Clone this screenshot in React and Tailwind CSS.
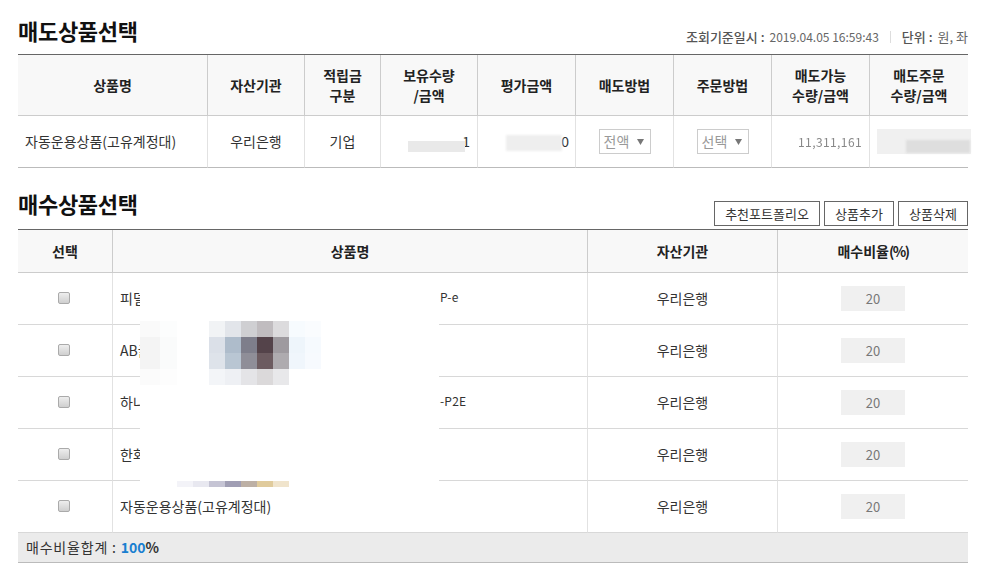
const sellHeaders = ['상품명', '자산기관', ['적립금', '구분'], ['보유수량', '/금액'], '평가금액', '매도방법', '주문방법', ['매도가능', '수량/금액'], ['매도주문', '수량/금액']];

const buyRows = [
  { left: '피델', right: 'P-e', gap: 'w-[320px]' },
  { left: 'AB글', right: '', gap: 'w-[20px]' },
  { left: '하나', right: '-P2E', gap: 'w-[320px]' },
  { left: '한화', right: '', gap: 'w-[20px]' },
  { left: '자동운용상품(고유계정대)', right: '', gap: '' },
];

const mosaic = [
  { y: 34, cells: [[0, 20, '#fafafa'], [20, 17, '#fcfdfd'], [69, 16, '#f1f3f5'], [85, 16, '#e2e5ea'], [101, 16, '#cfcfd2'], [117, 16, '#c0bcbf'], [133, 16, '#dcdbdd'], [149, 16, '#f7fbfe'], [165, 16, '#fafcfe']] },
  { y: 50, cells: [[0, 20, '#f4f4f4'], [20, 17, '#fafbfb'], [69, 16, '#dbe0e8'], [85, 16, '#aebccb'], [101, 16, '#7e7e8b'], [117, 16, '#54434a'], [133, 16, '#9e9a9f'], [149, 16, '#eef5fb'], [165, 16, '#f6fafe']] },
  { y: 66, cells: [[0, 20, '#f4f4f4'], [20, 17, '#fafbfb'], [69, 16, '#dee3ea'], [85, 16, '#b9c6d3'], [101, 16, '#8f8e98'], [117, 16, '#6c5b60'], [133, 16, '#aeabaf'], [149, 16, '#f0f6fc'], [165, 16, '#f7fafe']] },
  { y: 82, cells: [[0, 20, '#fbfbfb'], [20, 17, '#fdfdfd'], [69, 16, '#f3f5f8'], [85, 16, '#eef0f4'], [101, 16, '#e4e4e7'], [117, 16, '#dbd9da'], [133, 16, '#e8e8ea']] },
];

const strip = [[37, '#f3f3f8'], [53, '#e8e8f0'], [69, '#c5c4d4'], [85, '#a09eb4'], [101, '#bdb0a5'], [117, '#e0cb9c'], [133, '#f0e4cc']];

const SelectBox = ({ label }) => (
  <div className="mx-auto flex h-[25px] w-[52px] items-center justify-between border border-[#ccc] pl-[4px] pr-[6px] text-[#999]">
    <span>{label}</span>
    <svg width="7" height="7" viewBox="0 0 7 7">
      <path d="M0 1h7L3.5 7z" fill="#777" />
    </svg>
  </div>
);

const SectionTitle = ({ children }) => (
  <h2 className="text-[22px] leading-[28px] font-bold text-[#111] tracking-[-0.3px]">{children}</h2>
);

const Redaction = () => (
  <div className="absolute left-[140px] top-[287px] h-[200px] w-[299px] bg-white">
    <svg width="299" height="200" viewBox="0 0 299 200">
      {mosaic.map((row) =>
        row.cells.map(([x, w, fill]) => (
          <rect key={`${row.y}-${x}`} x={x} y={row.y} width={w} height="16" fill={fill} />
        ))
      )}
      {strip.map(([x, fill]) => (
        <rect key={x} x={x} y="194" width="16" height="6" fill={fill} />
      ))}
    </svg>
  </div>
);

const App = () => {
  return (
    <div className="relative h-[579px] w-[995px] overflow-hidden bg-white pl-[18px] font-['Noto_Sans_CJK_KR','Liberation_Sans',sans-serif] text-[14px] text-[#333]">
      <div className="w-[950px]">
        <div className="flex h-[54px] items-end justify-between">
          <div className="pb-[10px]">
            <SectionTitle>매도상품선택</SectionTitle>
          </div>
          <div className="flex items-center pb-[9px] text-[13px] leading-[16px] text-[#555]">
            <span className="font-medium">조회기준일시 :</span>
            <span className="ml-[5px] text-[12px] text-[#666]">2019.04.05 16:59:43</span>
            <span className="mx-[11px] h-[12px] w-px bg-[#ddd]"></span>
            <span className="font-medium">단위 :</span>
            <span className="ml-[5px] text-[#666]">원, 좌</span>
          </div>
        </div>

        <table className="w-full table-fixed border-separate border-spacing-0 border-t border-[#666]">
          <colgroup>
            <col className="w-[189px]" />
            <col className="w-[97px]" />
            <col className="w-[76px]" />
            <col className="w-[97px]" />
            <col className="w-[98px]" />
            <col className="w-[98px]" />
            <col className="w-[98px]" />
            <col className="w-[98px]" />
            <col className="w-[99px]" />
          </colgroup>
          <thead>
            <tr>
              {sellHeaders.map((h, i) => (
                <th
                  key={i}
                  className={`h-[61px] border-b border-[#ccc] bg-[#f8f8f8] text-center text-[14px] leading-[20px] font-bold text-[#222] ${i > 0 ? 'border-l' : ''}`}
                >
                  {Array.isArray(h) ? h.map((line) => <div key={line}>{line}</div>) : h}
                </th>
              ))}
            </tr>
          </thead>
          <tbody>
            <tr className="h-[52px]">
              <td className="border-b border-[#bbb] pl-[7px]">자동운용상품(고유계정대)</td>
              <td className="border-b border-l border-b-[#bbb] border-l-[#e2e2e2] text-center">우리은행</td>
              <td className="border-b border-l border-b-[#bbb] border-l-[#e2e2e2] text-center">기업</td>
              <td className="relative border-b border-l border-b-[#bbb] border-l-[#e2e2e2] pr-[7px] text-right">
                1
                <span className="absolute left-[27px] top-[25px] h-[11px] w-[57px] bg-[#e9e9e9]"></span>
              </td>
              <td className="relative border-b border-l border-b-[#bbb] border-l-[#e2e2e2] pr-[6px] text-right">
                0
                <span className="absolute left-[28px] top-[19px] h-[16px] w-[56px] bg-[#eeeeee] blur-[1px]"></span>
              </td>
              <td className="border-b border-l border-b-[#bbb] border-l-[#e2e2e2] text-center">
                <SelectBox label="전액" />
              </td>
              <td className="border-b border-l border-b-[#bbb] border-l-[#e2e2e2] text-center">
                <SelectBox label="선택" />
              </td>
              <td className="border-b border-l border-b-[#bbb] border-l-[#e2e2e2] pr-[7px] text-right">
                <span className="text-[12px] tracking-[0.4px] text-[#888] blur-[0.6px]">11,311,161</span>
              </td>
              <td className="relative border-b border-l border-b-[#bbb] border-l-[#e2e2e2]">
                <span className="absolute left-[7px] top-[13px] h-[25px] w-[94px] bg-[#f0f0f0]"></span>
                <span className="absolute left-[36px] top-[24px] h-[13px] w-[64px] bg-[#dedede] blur-[1px]"></span>
              </td>
            </tr>
          </tbody>
        </table>

        <div className="flex h-[61px] items-end justify-between">
          <div className="pb-[12px]">
            <SectionTitle>매수상품선택</SectionTitle>
          </div>
          <div className="flex gap-1 pb-[3px]">
            <button className="h-[25px] w-[106px] border border-[#666] bg-white text-[13px] text-[#333]">추천포트폴리오</button>
            <button className="h-[25px] w-[70px] border border-[#666] bg-white text-[13px] text-[#333]">상품추가</button>
            <button className="h-[25px] w-[70px] border border-[#666] bg-white text-[13px] text-[#333]">상품삭제</button>
          </div>
        </div>

        <table className="w-full table-fixed border-separate border-spacing-0 border-t border-[#666]">
          <colgroup>
            <col className="w-[94px]" />
            <col className="w-[475px]" />
            <col className="w-[190px]" />
            <col className="w-[191px]" />
          </colgroup>
          <thead>
            <tr>
              {['선택', '상품명', '자산기관'].map((h, i) => (
                <th
                  key={h}
                  className={`h-[43px] border-b border-[#ccc] bg-[#f8f8f8] text-center text-[14px] font-bold text-[#222] ${i > 0 ? 'border-l' : ''}`}
                >
                  {h}
                </th>
              ))}
              <th className="h-[43px] border-b border-l border-[#ccc] bg-[#f8f8f8] text-center text-[14px] font-bold text-[#222]">
                매수비율<span className="tracking-[-1.5px]">(%)</span>
              </th>
            </tr>
          </thead>
          <tbody>
            {buyRows.map((row, i) => (
              <tr key={i} className="h-[52px]">
                <td className="border-b border-[#d8d8d8] text-center">
                  <input
                    type="checkbox"
                    disabled
                    className="mr-[2px] mb-[4px] inline-block h-[12px] w-[12px] appearance-none rounded-[2px] border border-[#aaa] bg-gradient-to-b from-[#eeeeee] to-[#cfcfcf] align-middle"
                  />
                </td>
                <td className="border-b border-l border-b-[#d8d8d8] border-l-[#e2e2e2] pl-[7px]">
                  <div className="flex whitespace-nowrap">
                    <span className={row.gap}>{row.left}</span>
                    {row.right && <span className="text-[12px] tracking-[0.2px]">{row.right}</span>}
                  </div>
                </td>
                <td className="border-b border-l border-b-[#d8d8d8] border-l-[#e2e2e2] text-center">우리은행</td>
                <td className="border-b border-l border-b-[#d8d8d8] border-l-[#e2e2e2]">
                  <div className="mx-auto flex h-[25px] w-[64px] items-center justify-center bg-[#f0f0f0] text-[13px] text-[#777]">20</div>
                </td>
              </tr>
            ))}
          </tbody>
        </table>

        <div className="flex h-[30px] items-center border-b border-[#bbb] bg-[#ebebeb] pl-[8px]">
          <span className="tracking-[0.8px]">매수비율합계 :</span>
          <span className="ml-[4px] font-bold text-[#1a7fd0]">100</span>
          <span className="font-bold">%</span>
        </div>
      </div>

      <Redaction />
    </div>
  );
};

export default App;
